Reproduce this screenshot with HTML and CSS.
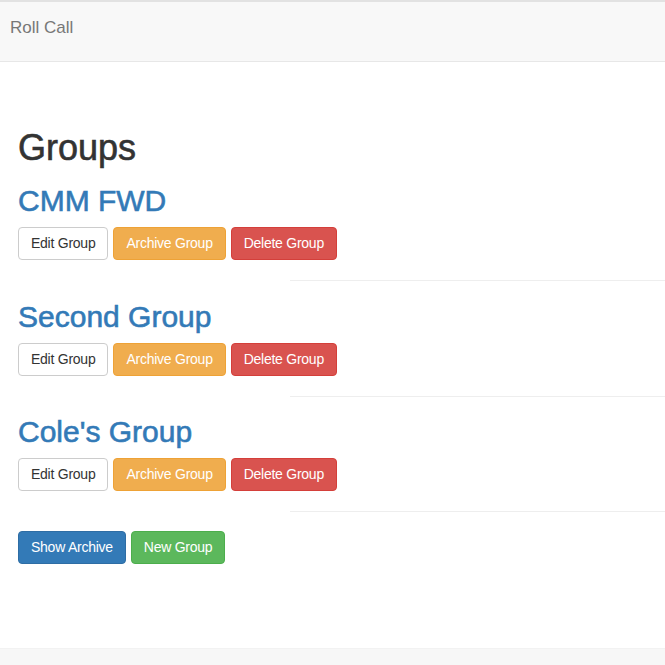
FILE: index.html
```html
<!DOCTYPE html>
<html lang="en">
<head>
<meta charset="utf-8">
<title>Roll Call</title>
<link rel="stylesheet" href="styles.css">
</head>
<body>
<nav class="navbar">
  <a class="brand" href="#">Roll Call</a>
</nav>
<main class="content">
  <h1 class="page-title">Groups</h1>
  <section class="group">
    <h2 class="group-name"><a href="#">CMM FWD</a></h2>
    <div class="actions">
      <button class="btn btn-default">Edit Group</button>
      <button class="btn btn-warning">Archive Group</button>
      <button class="btn btn-danger">Delete Group</button>
    </div>
    <hr class="divider">
  </section>
  <section class="group">
    <h2 class="group-name"><a href="#">Second Group</a></h2>
    <div class="actions">
      <button class="btn btn-default">Edit Group</button>
      <button class="btn btn-warning">Archive Group</button>
      <button class="btn btn-danger">Delete Group</button>
    </div>
    <hr class="divider">
  </section>
  <section class="group">
    <h2 class="group-name"><a href="#">Cole's Group</a></h2>
    <div class="actions">
      <button class="btn btn-default">Edit Group</button>
      <button class="btn btn-warning">Archive Group</button>
      <button class="btn btn-danger">Delete Group</button>
    </div>
    <hr class="divider">
  </section>
  <div class="actions bottom-actions">
    <button class="btn btn-primary">Show Archive</button>
    <button class="btn btn-success">New Group</button>
  </div>
</main>
<footer class="footer"></footer>
</body>
</html>
```

FILE: styles.css
```css
* { box-sizing: border-box; }

html, body {
  margin: 0;
  padding: 0;
  background: #fff;
}

body {
  font-family: "Liberation Sans", Arial, Helvetica, sans-serif;
  font-size: 14px;
  line-height: 20px;
  color: #333;
}

.navbar {
  height: 62px;
  background: #f8f8f8;
  border-top: 2px solid #e2e2e2;
  border-bottom: 1px solid #e7e7e7;
  padding: 16px 0 0 10px;
}

.brand {
  font-size: 17px;
  line-height: 20px;
  color: #777;
  text-decoration: none;
  display: inline-block;
}

.content {
  padding: 66px 0 0 18px;
}

.page-title {
  margin: 0;
  font-size: 36px;
  line-height: 40px;
  font-weight: 400;
  -webkit-text-stroke: 0.6px #333;
  color: #333;
}

.group-name {
  margin: 16px 0 10px;
  font-size: 30px;
  line-height: 33px;
  font-weight: 400;
}

.group + .group .group-name {
  margin-top: 18.5px;
}

.group-name a {
  color: #337ab7;
  text-decoration: none;
  -webkit-text-stroke: 0.6px #337ab7;
}

.actions {
  display: flex;
  gap: 5px;
}

.btn {
  font-family: inherit;
  font-size: 14px;
  line-height: 19px;
  padding: 6px 12px;
  border: 1px solid transparent;
  border-radius: 4px;
  letter-spacing: -0.25px;
  cursor: pointer;
  margin: 0;
}

.btn-default { background: #fff; border-color: #ccc; color: #333; }
.btn-warning { background: #f0ad4e; border-color: #eea236; color: #fff; }
.btn-danger { background: #d9534f; border-color: #d43f3a; color: #fff; }
.btn-primary { background: #337ab7; border-color: #2e6da4; color: #fff; }
.btn-success { background: #5cb85c; border-color: #4cae4c; color: #fff; }

.divider {
  margin: 20px 0 0 272px;
  border: 0;
  border-top: 1px solid #eee;
  height: 0;
}

.bottom-actions {
  margin-top: 19px;
}

.footer {
  margin-top: 84px;
  height: 20px;
  background: #f7f7f7;
  border-top: 1px solid #f2f2f2;
}
```
